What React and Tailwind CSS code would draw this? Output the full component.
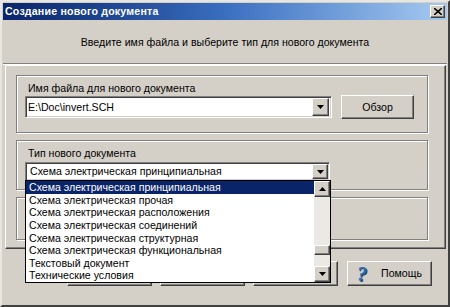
const raised =
  "bg-[#d4d0c8] border border-t-white border-l-white border-r-[#404040] border-b-[#404040] shadow-[inset_-1px_-1px_0_#808080]";
const sunken =
  "bg-white border border-t-[#808080] border-l-[#808080] border-r-white border-b-white shadow-[inset_1px_1px_0_#404040,inset_-1px_-1px_0_#d4d0c8]";
const groupBox =
  "border border-[#808080] shadow-[inset_1px_1px_0_#fff,1px_1px_0_#fff]";

const items = [
  "Схема электрическая принципиальная",
  "Схема электрическая прочая",
  "Схема электрическая расположения",
  "Схема электрическая соединений",
  "Схема электрическая структурная",
  "Схема электрическая функциональная",
  "Текстовый документ",
  "Технические условия",
];

function Arrow({ up }) {
  return (
    <svg width="7" height="4" viewBox="0 0 7 4">
      <path d={up ? "M3.5 0L7 4H0z" : "M0 0h7L3.5 4z"} fill="#000" />
    </svg>
  );
}

function DropButton({ className }) {
  return (
    <div className={`${raised} flex items-center justify-center ${className}`}>
      <Arrow />
    </div>
  );
}

function Button({ children, className = "" }) {
  return (
    <div
      className={`h-[25px] w-[85px] flex items-center justify-center border border-t-white border-l-white border-r-[#404040] border-b-[#404040] shadow-[inset_-1px_-1px_0_#808080] ${className}`}
    >
      {children}
    </div>
  );
}

export default function App() {
  return (
    <div
      className="relative w-[450px] h-[307px] bg-[#d4d0c8] text-[10.6px] leading-[13px] text-black border-2 border-t-[#e8e6e0] border-l-[#e8e6e0] border-r-[#404040] border-b-[#404040] p-px flex flex-col overflow-hidden"
      style={{ fontFamily: '"Liberation Sans", Arial, sans-serif' }}
    >
      {/* title bar */}
      <div className="h-[17px] shrink-0 flex items-center justify-between pl-[2px] pr-[2px] bg-gradient-to-r from-[#0a246a] via-[#3a6ec0] to-[#a6caf0]">
        <span className="text-white font-bold text-[10.6px] tracking-[0.2px]">
          Создание нового документа
        </span>
        <div className={`${raised} w-[15px] h-[13px] flex items-center justify-center`}>
          <svg width="8" height="7" viewBox="0 0 8 7">
            <path d="M0 0L8 7M8 0L0 7" stroke="#000" strokeWidth="1.6" />
          </svg>
        </div>
      </div>

      {/* header */}
      <div className="h-[43px] shrink-0 flex items-center justify-center pt-[1px]">
        Введите имя файла и выберите тип для нового документа
      </div>
      <div className="h-[2px] shrink-0 border-t border-t-[#808080] border-b border-b-white" />

      {/* main panel */}
      <div className="ml-[2px] w-[441px] border border-t-white border-l-white border-r-[#404040] border-b-[#404040] shadow-[inset_-1px_-1px_0_#808080] pl-[10px] pt-[9px] pb-[8px] flex flex-col gap-[7px]">
        <div className={`${groupBox} w-[412px] h-[58px] pl-[8px] pt-[6px]`}>
          <div className="ml-[3px]">Имя файла для нового документа</div>
          <div className="flex items-start mt-[1px]">
            <div className={`${sunken} w-[307px] h-[22px] flex items-center justify-between pl-[2px] pr-[2px]`}>
              <span>E:\Doc\invert.SCH</span>
              <DropButton className="w-[17px] h-[18px]" />
            </div>
            <div className={`${raised} ml-[9px] -mt-[1px] w-[73px] h-[24px] flex items-center justify-center`}>
              Обзор
            </div>
          </div>
        </div>

        <div className={`${groupBox} w-[412px] h-[50px] pl-[8px] pt-[6px]`}>
          <div className="ml-[3px]">Тип нового документа</div>
          <div className={`${sunken} mt-[2px] w-[305px] h-[19px] flex items-center justify-between pl-[4px] pr-[1px]`}>
            <span>Схема электрическая принципиальная</span>
            <DropButton className="w-[16px] h-[15px]" />
          </div>
        </div>

        <div className={`${groupBox} w-[412px] h-[43px]`} />
      </div>

      {/* buttons (first three are covered by the open list) */}
      <div className="mt-[12px] ml-[64px] flex gap-[8px]">
        <Button />
        <Button />
        <Button />
        <Button className="ml-[1px] gap-[14px]">
          <span
            className="text-[#2a6fb0] font-bold italic text-[20px] leading-[20px] [text-shadow:1px_1px_0_#1b3f66]"
            style={{ fontFamily: '"Liberation Serif", serif' }}
          >
            ?
          </span>
          <span>Помощь</span>
        </Button>
      </div>

      {/* dropped list */}
      <div className="absolute left-[23px] top-[178px] w-[306px] h-[103px] bg-white border border-black flex">
        <div className="flex-1 flex flex-col">
          {items.map((t, i) => (
            <div
              key={t}
              className={`h-[12.6px] leading-[12px] pt-[0.3px] pl-[3px] whitespace-nowrap ${
                i === 0 ? "bg-[#0a246a] text-white" : ""
              }`}
            >
              {t}
            </div>
          ))}
        </div>
        <div className="relative w-[16px] bg-[#ebe9e4] flex flex-col justify-between">
          <div className={`${raised} h-[16px] flex items-center justify-center`}>
            <Arrow up />
          </div>
          <div className={`${raised} absolute left-0 top-[64px] w-[16px] h-[10px]`} />
          <div className={`${raised} h-[16px] flex items-center justify-center`}>
            <Arrow />
          </div>
        </div>
      </div>
    </div>
  );
}
